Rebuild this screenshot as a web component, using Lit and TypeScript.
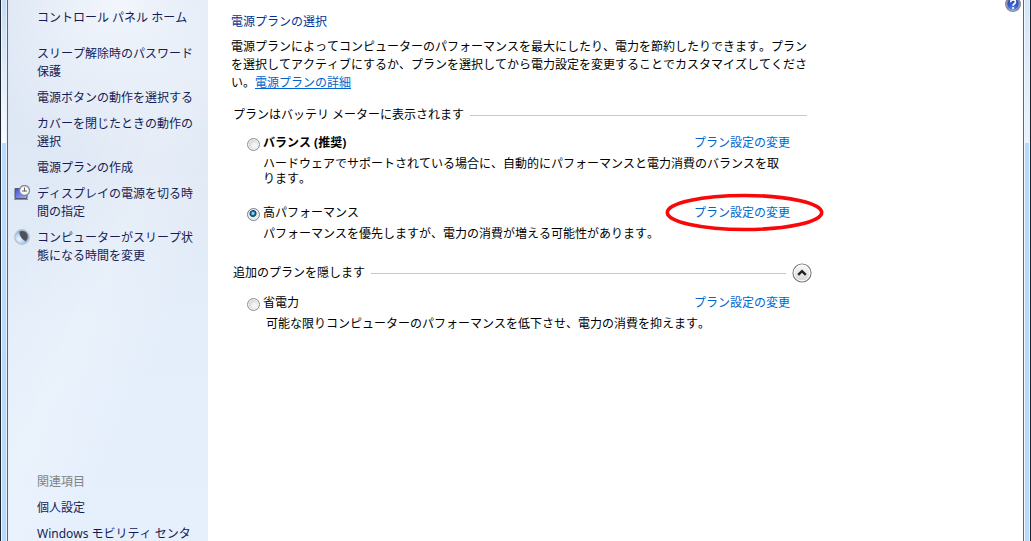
import { LitElement, html, css, svg, nothing } from "lit";
import { customElement, state } from "lit/decorators.js";

interface Plan {
  id: string;
  name: string;
  text: string;
  recommended?: boolean;
  marked?: boolean;
  extra?: boolean;
}

const PLANS: Plan[] = [
  {
    id: "balanced",
    name: "バランス (推奨)",
    text: "ハードウェアでサポートされている場合に、自動的にパフォーマンスと電力消費のバランスを取ります。",
    recommended: true,
  },
  {
    id: "high",
    name: "高パフォーマンス",
    text: "パフォーマンスを優先しますが、電力の消費が増える可能性があります。",
    marked: true,
  },
  {
    id: "saver",
    name: "省電力",
    text: "可能な限りコンピューターのパフォーマンスを低下させ、電力の消費を抑えます。",
    extra: true,
  },
];

const displayIcon = svg`
  <defs>
    <linearGradient id="scr" x1="0" y1="0" x2="1" y2="1">
      <stop offset="0" stop-color="#3f4bd0" /><stop offset="1" stop-color="#a3b4ff" />
    </linearGradient>
  </defs>
  <path d="M1 3.500h12v10H1z" fill="url(#scr)" stroke="#4d5272" />
  <path d="M0 14.500h14" stroke="#8b8f9c" />
  <circle cx="10.500" cy="5.500" r="5" fill="#f6f7f7" stroke="#85888c" stroke-width="1.300" />
  <path d="M10.500 2.500v4M8 6h5" stroke="#5f6870" fill="none" />`;

const moonIcon = svg`
  <defs>
    <radialGradient id="moon" cx="0.300" cy="0.650" r="0.700">
      <stop offset="0" stop-color="#f2f9ff" /><stop offset="0.500" stop-color="#b4cfef" /><stop offset="1" stop-color="#6d8fc0" />
    </radialGradient>
  </defs>
  <circle cx="8" cy="8" r="7.200" fill="url(#moon)" stroke="#bcc3cb" stroke-width="1.400" />
  <path d="M5.500 2.600C8.500 1.300 12.200 2.300 13.300 5.500C14.200 8.500 13.200 11 11.600 12.200C8.500 11 5 7 5.500 2.600z" fill="#4c535d" />`;

const TASKS = [
  { text: "スリープ解除時のパスワード保護" },
  { text: "電源ボタンの動作を選択する" },
  { text: "カバーを閉じたときの動作の選択" },
  { text: "電源プランの作成" },
  { text: "ディスプレイの電源を切る時間の指定", icon: displayIcon },
  { text: "コンピューターがスリープ状態になる時間を変更", icon: moonIcon },
];

@customElement("app-root")
export class AppRoot extends LitElement {
  static styles = css`
    :host {
      display: flex;
      height: 100vh;
      overflow: hidden;
      background: #fff;
      color: #000;
      font: 12px/18px "Noto Sans", "Noto Sans CJK JP", sans-serif;
      font-kerning: none;
    }
    a {
      color: #0066cc;
      text-decoration: none;
    }
    .frame {
      flex: none;
      box-sizing: border-box;
      width: 8px;
      border-left: 1px solid #1d2430;
      border-right: 1px solid #56697f;
      background: linear-gradient(#c4dcf5, #fafcff 143px, #b9dafa 143px, #b9d9f9);
      box-shadow: inset 1px 0 #f2f8ff, inset -1px 0 #e4f0fc;
    }
    .frame.right {
      border-left-color: #56697f;
      border-right-color: #1d2430;
      background: linear-gradient(#d3e6fa, #e9f3fe 143px, #b9dafa 143px, #b9d9f9);
    }
    .side {
      flex: none;
      box-sizing: border-box;
      width: 200px;
      padding: 9px 10px 0 29px;
      display: flex;
      flex-direction: column;
      justify-content: space-between;
      overflow: hidden;
      line-break: anywhere;
      background:
        radial-gradient(ellipse 150px 170px at 55% 0, rgba(245, 248, 253, 0.9), rgba(245, 248, 253, 0)),
        linear-gradient(115deg, rgba(255, 255, 255, 0) 30%, rgba(255, 255, 255, 0.2) 50%, rgba(255, 255, 255, 0) 70%),
        linear-gradient(#d9e4f3, #dfe8f5 30%, #e4eefa 60%, #e6f0fd);
    }
    .side a {
      color: #151c55;
    }
    .home {
      display: block;
      margin-bottom: 18px;
    }
    .list {
      display: flex;
      flex-direction: column;
      gap: 8px;
      margin: 0;
      padding: 0;
      list-style: none;
    }
    .task {
      position: relative;
    }
    .task-icon {
      position: absolute;
      left: -23px;
      top: 0;
      width: 16px;
      height: 16px;
    }
    .related {
      height: 68px;
      flex: none;
    }
    .related-title {
      margin: 0 0 8px;
      font: inherit;
      color: #838383;
    }
    .main {
      flex: 1;
      min-width: 0;
      display: flex;
      justify-content: space-between;
      align-items: flex-start;
      padding: 0 2px 0 23px;
    }
    .content {
      flex: 0 1 581px;
      min-width: 0;
      padding-top: 13px;
    }
    .title {
      margin: 0 0 7px;
      font: inherit;
      color: #003399;
    }
    .intro {
      margin: 0 5px 14px 0;
      line-break: anywhere;
    }
    .intro a {
      text-decoration: underline;
    }
    .group {
      margin: 0 0 10px;
      padding: 0 5px 0 2px;
      display: flex;
      align-items: center;
      gap: 6px;
    }
    .group.more {
      margin: 22px 0 12px;
      padding-right: 0;
    }
    .group-name {
      font: inherit;
      margin: 0;
    }
    .rule {
      flex: 1;
      height: 1px;
      background: #c8c8c8;
    }
    .toggle {
      width: 20px;
      height: 20px;
      margin: -1px 0;
      padding: 0;
      border: 0;
      background: none;
    }
    .toggle svg,
    .help svg {
      display: block;
    }
    .plan {
      display: grid;
      grid-template-columns: 13px 1fr auto;
      column-gap: 3px;
      row-gap: 3px;
      padding: 0 22px 0 16px;
      margin-bottom: 17px;
    }
    .radio {
      appearance: none;
      width: 13px;
      height: 13px;
      margin: 4px 0 0;
      align-self: start;
      border: 1px solid #8e8f8f;
      border-radius: 50%;
      background: radial-gradient(circle at 60% 60%, #f4f4f4 0 20%, #cfd1d3 65%);
      box-shadow: inset 0 0 0 1px #f4f4f4;
    }
    .radio:checked {
      border-color: #6f7f8c;
      background: radial-gradient(circle at 45% 40%, #7fd4f2 0 1px, #1c6fa0 2px, #0c3350 3px, #dfe8ee 4px);
    }
    .name.strong {
      font-weight: bold;
    }
    .change {
      position: relative;
    }
    .mark {
      position: absolute;
      left: -29px;
      top: -11px;
      width: 160px;
      height: 40px;
      pointer-events: none;
    }
    .text {
      grid-column: 2 / 4;
      margin: 0;
      padding: 1px 0;
      line-height: 15px;
      line-break: anywhere;
    }
    .extra .text {
      padding-left: 3px;
    }
    .help {
      flex: none;
      margin: -4px 0 0;
      padding: 0;
      border: 0;
      background: none;
    }
  `;

  @state() private selected = "high";
  @state() private open = true;

  private renderPlan(plan: Plan) {
    return html`<div class="plan ${plan.extra ? "extra" : ""}">
      <input
        class="radio"
        type="radio"
        name="plan"
        id=${plan.id}
        .checked=${this.selected === plan.id}
        @change=${() => (this.selected = plan.id)}
      />
      <label class="name ${plan.recommended ? "strong" : ""}" for=${plan.id}>${plan.name}</label>
      <a class="change" href="#"
        >プラン設定の変更${plan.marked
          ? html`<svg class="mark" viewBox="0 0 160 40" aria-hidden="true">
              <ellipse cx="79.500" cy="19.500" rx="77.200" ry="17" fill="none" stroke="#f80808" stroke-width="3.600" />
            </svg>`
          : nothing}</a
      >
      <p class="text">${plan.text}</p>
    </div>`;
  }

  render() {
    return html`
      <div class="frame"></div>
      <nav class="side">
        <div>
          <a class="home" href="#">コントロール パネル ホーム</a>
          <ul class="list">
            ${TASKS.map(
              (t) => html`<li class="task">
                ${t.icon ? html`<svg class="task-icon" viewBox="0 0 16 16" fill="none" aria-hidden="true">${t.icon}</svg>` : nothing}
                <a href="#">${t.text}</a>
              </li>`
            )}
          </ul>
        </div>
        <div class="related">
          <h2 class="related-title">関連項目</h2>
          <ul class="list">
            <li><a href="#">個人設定</a></li>
            <li><a href="#">Windows モビリティ センター</a></li>
          </ul>
        </div>
      </nav>
      <main class="main">
        <div class="content">
          <h1 class="title">電源プランの選択</h1>
          <p class="intro">
            電源プランによってコンピューターのパフォーマンスを最大にしたり、電力を節約したりできます。プランを選択してアクティブにするか、プランを選択してから電力設定を変更することでカスタマイズしてください。<a href="#">電源プランの詳細</a>
          </p>
          <div class="group">
            <h2 class="group-name">プランはバッテリ メーターに表示されます</h2>
            <span class="rule"></span>
          </div>
          ${PLANS.filter((p) => !p.extra).map((p) => this.renderPlan(p))}
          <div class="group more">
            <h2 class="group-name">追加のプランを隠します</h2>
            <span class="rule"></span>
            <button class="toggle" aria-label="追加のプランを隠します" aria-expanded=${this.open} @click=${() => (this.open = !this.open)}>
              <svg width="20" height="20" viewBox="0 0 20 20" fill="none">
                <defs>
                  <linearGradient id="knob" x1="0" y1="0" x2="0" y2="1">
                    <stop offset="0" stop-color="#fafafa" /><stop offset="1" stop-color="#d4d4d4" />
                  </linearGradient>
                </defs>
                <circle cx="10" cy="10" r="9" fill="url(#knob)" stroke="#777" stroke-width="1.200" />
                <circle cx="10" cy="10" r="7.900" stroke="#fff" />
                <path d="M6.200 11.800L10 8.200l3.800 3.600" stroke="#222" stroke-width="2.400" />
              </svg>
            </button>
          </div>
          ${this.open ? PLANS.filter((p) => p.extra).map((p) => this.renderPlan(p)) : nothing}
        </div>
        <button class="help" aria-label="ヘルプ">
          <svg width="16" height="16" viewBox="0 0 16 16">
            <defs>
              <radialGradient id="ball" cx="0.500" cy="0.850" r="0.800">
                <stop offset="0" stop-color="#4f86ea" /><stop offset="1" stop-color="#1c2f9c" />
              </radialGradient>
            </defs>
            <circle cx="8" cy="8" r="7.300" fill="url(#ball)" stroke="#8d9096" stroke-width="1.400" />
            <circle cx="8" cy="8" r="6.200" fill="none" stroke="#c9cfdd" stroke-width="0.700" />
            <path d="M5.600 6.200C5.600 3.200 10.600 3.200 10.500 6C10.400 7.700 8.100 7.800 8.100 9.700" fill="none" stroke="#fff" stroke-width="1.700" />
            <circle cx="8.100" cy="12" r="1.100" fill="#fff" />
          </svg>
        </button>
      </main>
      <div class="frame right"></div>
    `;
  }
}
